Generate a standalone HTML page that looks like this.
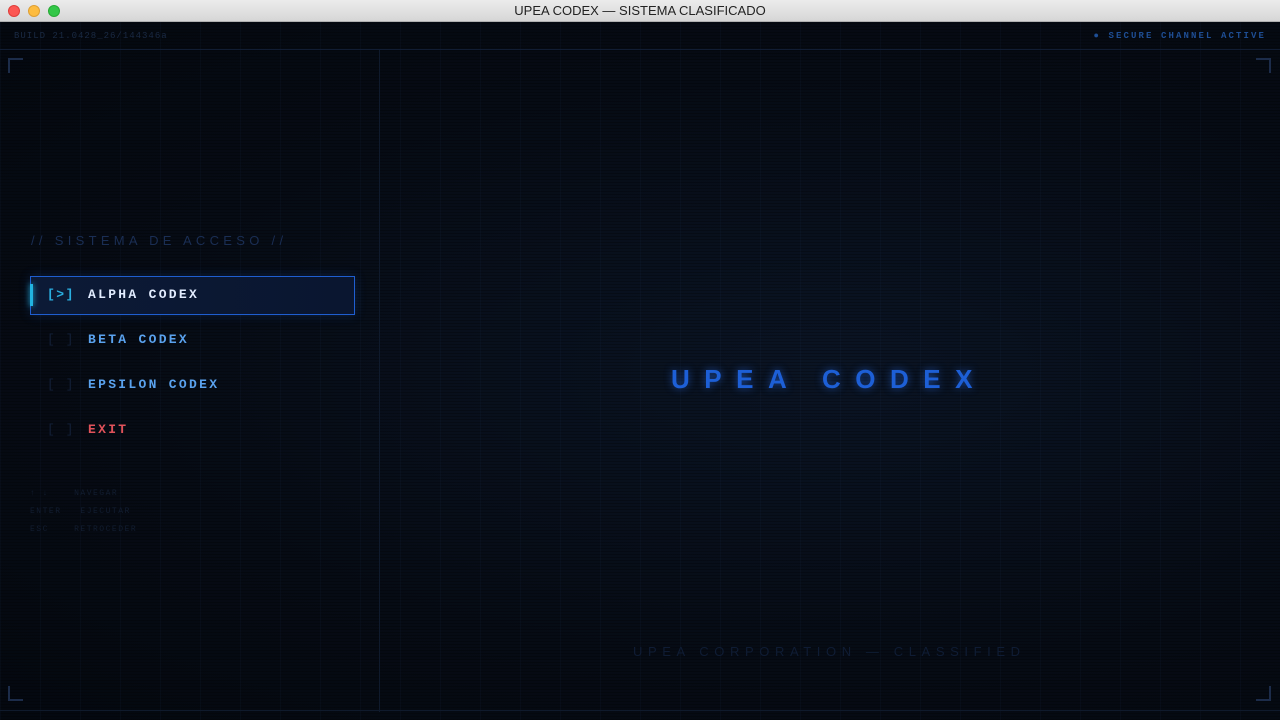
<!DOCTYPE html>
<html><head><meta charset="utf-8"><style>
*{margin:0;padding:0;box-sizing:border-box}
body{width:1280px;height:720px;overflow:hidden;background:#050a12;font-family:"Liberation Sans",sans-serif;position:relative}
.tb{position:absolute;left:0;top:0;width:1280px;height:22px;background:linear-gradient(#ececec,#d6d6d6);border-bottom:1px solid #b0b0b0;text-align:center;font-size:13px;line-height:22px;color:#222}
.dot{position:absolute;top:5px;width:12px;height:12px;border-radius:50%}
.main{position:absolute;left:0;top:22px;width:1280px;height:698px;
background:
repeating-linear-gradient(90deg,rgba(40,70,120,0.07) 0 1px,transparent 1px 40px),
repeating-linear-gradient(0deg,rgba(0,0,0,0.25) 0 1px,transparent 1px 3px),
radial-gradient(ellipse at 65% 50%,#0a1424 0%,#060b14 60%,#04080f 100%);}
.mono{font-family:"Liberation Mono",monospace}
.abs{position:absolute}
.c{position:absolute;width:15px;height:15px;border-color:#1c2c4a;border-style:solid;border-width:0}
</style></head><body>
<div class="tb"><div class="dot" style="left:8px;background:#fc5753;border:1px solid #df3e3a"></div><div class="dot" style="left:28px;background:#fdbc40;border:1px solid #de9f34"></div><div class="dot" style="left:48px;background:#33c748;border:1px solid #27aa35"></div>UPEA CODEX — SISTEMA CLASIFICADO</div>
<div class="main">
<div class="abs mono" style="left:14px;top:9px;font-size:9px;letter-spacing:1px;color:#1a2a44">BUILD 21.0428_26/144346a</div>
<div class="abs mono" style="right:14px;top:9px;font-size:9px;letter-spacing:2.1px;color:#1e4e94;font-weight:bold">● SECURE CHANNEL ACTIVE</div>
<div class="abs" style="left:0;top:27px;width:1280px;height:1px;background:#111d33"></div>
<div class="abs" style="left:379px;top:28px;width:1px;height:662px;background:#0f1a2c"></div>
<div class="abs" style="left:0;top:688px;width:1280px;height:1px;background:#0f1a2c"></div>
<div class="c" style="left:8px;top:36px;border-top-width:2px;border-left-width:2px"></div>
<div class="c" style="right:9px;top:36px;border-top-width:2px;border-right-width:2px"></div>
<div class="c" style="left:8px;top:664px;border-bottom-width:2px;border-left-width:2px"></div>
<div class="c" style="right:9px;top:664px;border-bottom-width:2px;border-right-width:2px"></div>
<div class="abs" style="left:31px;top:211px;font-size:13px;letter-spacing:4.3px;color:#1a2e54">// SISTEMA DE ACCESO //</div>
<div class="abs" style="left:30px;top:254px;width:325px;height:39px;border:1px solid #1f5ed0;background:linear-gradient(90deg,#0c1a36,#0a1630);box-shadow:0 0 10px rgba(30,90,200,0.25)"></div>
<div class="abs" style="left:30px;top:262px;width:3px;height:22px;background:#22b4e0;box-shadow:0 0 6px #22b4e0"></div>
<div class="abs mono" style="left:47px;top:265px;font-size:13px;font-weight:bold;letter-spacing:1.5px;color:#2aaee0">[&gt;]</div>
<div class="abs mono" style="left:88px;top:265px;font-size:13px;font-weight:bold;letter-spacing:2.3px;color:#e2ecff">ALPHA CODEX</div>
<div class="abs mono" style="left:47px;top:310px;font-size:13px;letter-spacing:1.5px;color:#132038">[ ]</div>
<div class="abs mono" style="left:88px;top:310px;font-size:13px;font-weight:bold;letter-spacing:2.3px;color:#5aa2ee">BETA CODEX</div>
<div class="abs mono" style="left:47px;top:355px;font-size:13px;letter-spacing:1.5px;color:#132038">[ ]</div>
<div class="abs mono" style="left:88px;top:355px;font-size:13px;font-weight:bold;letter-spacing:2.3px;color:#5aa2ee">EPSILON CODEX</div>
<div class="abs mono" style="left:47px;top:400px;font-size:13px;letter-spacing:1.5px;color:#132038">[ ]</div>
<div class="abs mono" style="left:88px;top:400px;font-size:13px;font-weight:bold;letter-spacing:2.3px;color:#e0525a">EXIT</div>
<div class="abs mono" style="left:30px;top:463px;font-size:8px;letter-spacing:1.5px;color:#121d30;line-height:18px">↑ ↓&nbsp;&nbsp;&nbsp;&nbsp;NAVEGAR<br>ENTER&nbsp;&nbsp;&nbsp;EJECUTAR<br>ESC&nbsp;&nbsp;&nbsp;&nbsp;RETROCEDER</div>
<div class="abs" style="left:671px;top:342px;font-size:26px;font-weight:bold;letter-spacing:14.5px;color:#1d5fd6;text-shadow:0 0 8px rgba(40,110,240,0.6);white-space:nowrap">UPEA CODEX</div>
<div class="abs" style="left:633px;top:622px;font-size:13px;letter-spacing:5.6px;color:#0f1c34;white-space:nowrap">UPEA CORPORATION — CLASSIFIED</div>
</div>
</body></html>
